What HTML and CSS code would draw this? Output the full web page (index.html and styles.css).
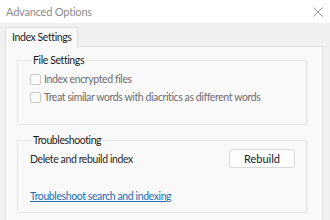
FILE: index.html
```html
<!DOCTYPE html>
<html lang="en">

<head>
    <meta charset="UTF-8">
    <title>Advanced Options</title>
    <link rel="stylesheet" href="styles.css">
</head>

<body>
    <!-- title bar -->
    <div class="titlebar">
        <span class="title">Advanced Options</span>
        <svg class="close" width="10" height="10" viewBox="0 0 10 10">
            <path d="M0.5 0.5 L9.5 9.5 M9.5 0.5 L0.5 9.5" stroke="#9a9a9a" stroke-width="1" fill="none" />
        </svg>
    </div>

    <div class="tabs">
        <div class="tab">Index Settings</div>
    </div>

    <div class="panel">
        <fieldset class="group">
            <legend>File Settings</legend>
            <label class="check"><span class="box"></span>Index encrypted files</label>
            <label class="check"><span class="box"></span>Treat similar words with diacritics as different words</label>
        </fieldset>

        <fieldset class="group trouble">
            <legend>Troubleshooting</legend>
            <div class="row">
                <span>Delete and rebuild index</span>
                <button class="btn">Rebuild</button>
            </div>
            <a class="link" href="#">Troubleshoot search and indexing</a>
        </fieldset>
    </div>
</body>

</html>
```

FILE: styles.css
```css
* {
    box-sizing: border-box;
}

body {
    margin: 0;
    width: 330px;
    height: 220px;
    overflow: hidden;
    background: #f0f0f0;
    font-family: Lato, 'Liberation Sans', sans-serif;
    font-size: 10.5px;
    letter-spacing: -0.4px;
    color: #1f1f1f;
}

.titlebar {
    height: 23px;
    background: #fff;
    display: flex;
    justify-content: space-between;
    align-items: center;
    padding: 0 6px 0 6px;
}

.title {
    font-size: 11px;
    letter-spacing: -0.2px;
    color: #8c8c8c;
}

.close {
    margin-right: 1px;
}

.tabs {
    padding: 4px 0 0 5px;
    display: flex;
}

.tab {
    height: 20px;
    line-height: 19px;
    padding: 0 6px;
    background: #f9f9f9;
    border: 1px solid #dedede;
    border-bottom: 0;
    margin-bottom: -1px;
    position: relative;
    z-index: 1;
}

.panel {
    margin: 0 7px 0 5px;
    height: 174px;
    background: #f9f9f9;
    border: 1px solid #e2e2e2;
    border-bottom: 0;
    padding: 7px 15px 0 11px;
}

.group {
    margin: 0;
    border: 1px solid #e4e4e4;
    padding: 4px 12px 0 12px;
    height: 71px;
}

.group legend {
    padding: 0 2px;
    margin-left: 1px;
    color: #1a1a1a;
}

.check {
    display: flex;
    align-items: center;
    height: 18px;
    color: #6e6e6e;
    white-space: nowrap;
}

.box {
    width: 11px;
    height: 11px;
    border: 1px solid #c9c9c9;
    border-radius: 2px;
    background: #fafafa;
    margin-right: 3px;
}

.trouble {
    margin-top: 9px;
    height: 79px;
    padding-top: 3px;
    padding-right: 11px;
}

.row {
    display: flex;
    justify-content: space-between;
    align-items: center;
    color: #2a2a2a;
}

.btn {
    width: 66px;
    height: 19px;
    font-family: inherit;
    font-size: 11px;
    letter-spacing: 0;
    color: #1a1a1a;
    background: #fdfdfd;
    border: 1px solid #d9d9d9;
    border-radius: 3px;
    padding: 0;
}

.link {
    display: inline-block;
    margin-top: 22px;
    color: #1f6db5;
    text-decoration: underline;
}
```
